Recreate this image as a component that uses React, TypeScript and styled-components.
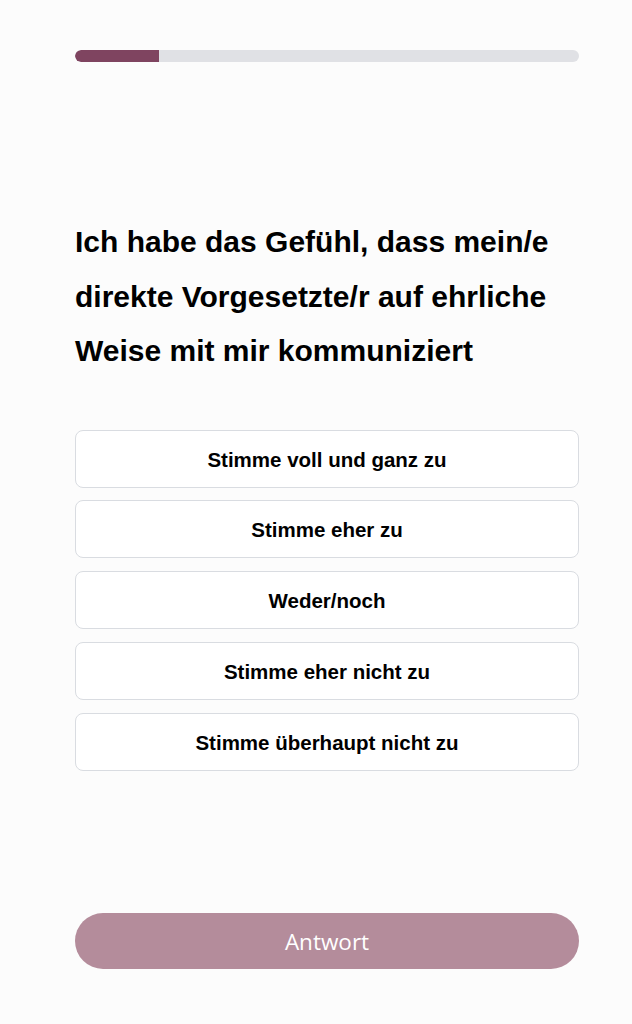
import React from "react";
import styled, { createGlobalStyle } from "styled-components";

const GlobalStyle = createGlobalStyle`
  html, body {
    margin: 0;
    padding: 0;
    background: #fcfcfc;
  }
  body {
    font-family: "Liberation Sans", Arial, sans-serif;
  }
`;

const Page = styled.div`
  width: 632px;
  height: 1024px;
  box-sizing: border-box;
  padding: 50px 53px 55px 75px;
  display: flex;
  flex-direction: column;
`;

const Track = styled.div`
  height: 12px;
  border-radius: 6px;
  background: #e0e1e5;
  overflow: hidden;
  display: flex;
`;

const Fill = styled.div`
  height: 100%;
  background: #7f4460;
  border-radius: 6px 0 0 6px;
`;

const Question = styled.h1`
  margin: 153px 0 0 0;
  font-family: "Liberation Sans", Arial, sans-serif;
  font-weight: 700;
  font-size: 30px;
  line-height: 54.5px;
  color: #000;
`;

const Options = styled.div`
  margin-top: 51px;
  display: flex;
  flex-direction: column;
  gap: 12.8px;
`;

const Option = styled.button`
  height: 58px;
  box-sizing: border-box;
  width: 100%;
  background: #fff;
  border: 1.5px solid #d9dce1;
  border-radius: 8px;
  font-family: "Liberation Sans", Arial, sans-serif;
  font-weight: 700;
  font-size: 20.5px;
  color: #000;
  display: flex;
  align-items: center;
  justify-content: center;
  padding: 2px 0 0 0;
`;

const Spacer = styled.div`
  flex: 1;
`;

const Submit = styled.button`
  height: 56px;
  width: 100%;
  border: none;
  border-radius: 28px;
  background: #b48c9b;
  color: #fff;
  font-family: "Open Sans", "Segoe UI", sans-serif;
  font-weight: 400;
  font-size: 22.5px;
  display: flex;
  align-items: center;
  justify-content: center;
`;

const answers = [
  "Stimme voll und ganz zu",
  "Stimme eher zu",
  "Weder/noch",
  "Stimme eher nicht zu",
  "Stimme überhaupt nicht zu",
];

export default function App() {
  const progress = 84 / 504;
  return (
    <>
      <GlobalStyle />
      <Page>
        <Track>
          <Fill style={{ width: `${progress * 100}%` }} />
        </Track>
        <Question>
          Ich habe das Gefühl, dass mein/e direkte Vorgesetzte/r auf ehrliche
          Weise mit mir kommuniziert
        </Question>
        <Options>
          {answers.map((a) => (
            <Option key={a}>{a}</Option>
          ))}
        </Options>
        <Spacer />
        <Submit>Antwort</Submit>
      </Page>
    </>
  );
}
